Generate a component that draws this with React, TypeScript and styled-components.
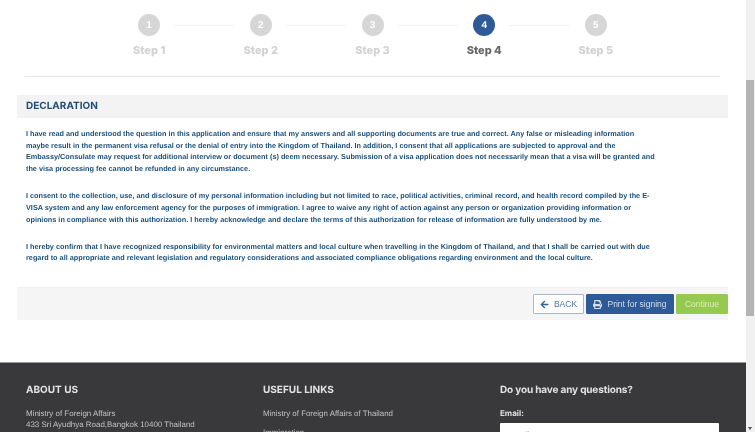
import React from 'react';
import styled, {createGlobalStyle} from 'styled-components';
import {FaArrowLeft, FaPrint} from 'react-icons/fa';

const GlobalStyle = createGlobalStyle`
	html, body {
		margin: 0;
		padding: 0;
		height: 432px;
		overflow: hidden;
		background: #fff;
		font-family: 'Liberation Sans', Arial, sans-serif;
		text-rendering: geometricPrecision;
	}
`;

const steps = [1, 2, 3, 4, 5];
const activeStep = 4;

export default function App() {
	return (
		<Page>
			<GlobalStyle />
			<Main>
				<Stepper>
					{steps.map((n) => (
						<Step key={n}>
							<Circle $active={n === activeStep}>{n}</Circle>
							<StepLabel $active={n === activeStep}>Step {n}</StepLabel>
						</Step>
					))}
				</Stepper>
				<Divider />
				<SectionHeader>DECLARATION</SectionHeader>
				<Body>
					<p>
						I have read and understood the question in this application and ensure that my answers and all supporting documents are true and correct. Any false or misleading information maybe result in the permanent visa refusal or the denial of entry into the Kingdom of Thailand. In addition, I consent that all applications are subjected to approval and the Embassy/Consulate may request for additional interview or document (s) deem necessary. Submission of a visa application does not necessarily mean that a visa will be granted and the visa processing fee cannot be refunded in any circumstance.
					</p>
					<p>
						I consent to the collection, use, and disclosure of my personal information including but not limited to race, political activities, criminal record, and health record compiled by the E-VISA system and any law enforcement agency for the purposes of immigration. I agree to waive any right of action against any person or organization providing information or opinions in compliance with this authorization. I hereby acknowledge and declare the terms of this authorization for release of information are fully understood by me.
					</p>
					<p>
						I hereby confirm that I have recognized responsibility for environmental matters and local culture when travelling in the Kingdom of Thailand, and that I shall be carried out with due regard to all appropriate and relevant legislation and regulatory considerations and associated compliance obligations regarding environment and the local culture.
					</p>
				</Body>
				<ActionBar>
					<BackButton>
						<FaArrowLeft size={9} color='#2a6496' />
						BACK
					</BackButton>
					<PrintButton>
						<FaPrint size={9} />
						Print for signing
					</PrintButton>
					<ContinueButton>Continue</ContinueButton>
				</ActionBar>
				<Footer>
					<FooterColumn>
						<FooterTitle>ABOUT US</FooterTitle>
						<FooterText>
							Ministry of Foreign Affairs
							<br />
							433 Sri Ayudhya Road,Bangkok 10400 Thailand
						</FooterText>
					</FooterColumn>
					<FooterColumn>
						<FooterTitle>USEFUL LINKS</FooterTitle>
						<FooterLink>Ministry of Foreign Affairs of Thailand</FooterLink>
						<FooterLink>Immigration</FooterLink>
					</FooterColumn>
					<FooterColumn>
						<QuestionTitle>Do you have any questions?</QuestionTitle>
						<EmailLabel>Email:</EmailLabel>
						<EmailInput placeholder='Email' />
					</FooterColumn>
				</Footer>
			</Main>
			<Scrollbar>
				<Thumb />
				<ArrowDown />
			</Scrollbar>
		</Page>
	);
}

const Page = styled.div`
	display: flex;
	width: 755px;
	height: 432px;
	overflow: hidden;
	filter: blur(0.55px);
`;

const Main = styled.div`
	width: 746px;
	flex: none;
`;

const Stepper = styled.div`
	display: flex;
	justify-content: center;
	padding-top: 14px;
	height: 61px;
	box-sizing: border-box;
	margin-left: -1px;
`;

const Step = styled.div`
	position: relative;
	width: 111.7px;
	display: flex;
	flex-direction: column;
	align-items: center;

	&:not(:last-child)::after {
		content: '';
		position: absolute;
		top: 10.5px;
		left: 81px;
		width: 60px;
		height: 1px;
		background: #f3f3f3;
	}
`;

const Circle = styled.div<{$active: boolean}>`
	width: 22px;
	height: 22px;
	border-radius: 50%;
	background: ${(p) => (p.$active ? '#2f5a98' : '#d6d6d6')};
	color: #fff;
	font-size: 10px;
	font-weight: 700;
	display: flex;
	align-items: center;
	justify-content: center;
`;

const StepLabel = styled.div<{$active: boolean}>`
	margin-top: 7px;
	font-size: 11px;
	line-height: 14px;
	font-weight: 800;
	font-family: Inter, 'Liberation Sans', sans-serif;
	color: ${(p) => (p.$active ? '#666' : '#d2d2d2')};
`;

const Divider = styled.div`
	height: 1px;
	margin: 15px 26px 18px 25px;
	background: #e6e6e6;
`;

const SectionHeader = styled.div`
	margin: 0 18px 0 17px;
	height: 23px;
	padding-left: 9px;
	background: #f3f3f3;
	color: #1e4d78;
	font-size: 10px;
	font-weight: 700;
	font-family: Inter, 'Liberation Sans', sans-serif;
	line-height: 23px;
`;

const Body = styled.div`
	margin: 10px 0 0 26px;
	width: 631.5px;
	height: 159px;
	color: #1a4f7a;
	font-size: 7.29px;
	font-weight: 700;
	line-height: 11.67px;

	p {
		margin: 0 0 15.5px;
	}
`;

const ActionBar = styled.div`
	margin: 0 18px 0 17px;
	height: 33px;
	box-sizing: border-box;
	padding-top: 6px;
	background: #f5f5f5;
	border-top: 1px solid #eee;
	display: flex;
	justify-content: flex-end;
	gap: 2px;
`;

const BaseButton = styled.button`
	height: 20px;
	box-sizing: border-box;
	display: flex;
	align-items: center;
	justify-content: center;
	gap: 5px;
	padding: 0;
	font-family: 'Liberation Sans', Arial, sans-serif;
	font-size: 8.5px;
	border-radius: 1px;
`;

const BackButton = styled(BaseButton)`
	width: 51px;
	background: #fff;
	border: 1.5px solid #a9b7cc;
	color: #4f7299;
`;

const PrintButton = styled(BaseButton)`
	width: 88px;
	background: #2f5a98;
	border: 1px solid #2f5a98;
	color: #d5deea;
`;

const ContinueButton = styled(BaseButton)`
	width: 52px;
	background: #96c94f;
	border: 1px solid #96c94f;
	color: #dcefc0;
`;

const Footer = styled.div`
	margin-top: 42px;
	height: 70px;
	box-sizing: border-box;
	background: #39393b;
	border-top: 1px solid #9a9a9a;
	padding: 21px 27px 0 26px;
	display: grid;
	grid-template-columns: 237px 237px 219px;
	overflow: hidden;
`;

const FooterColumn = styled.div`
	display: flex;
	flex-direction: column;
`;

const FooterTitle = styled.div`
	font-family: Inter, 'Liberation Sans', sans-serif;
	font-size: 10px;
	font-weight: 700;
	line-height: 13px;
	color: #e2e2e2;
	margin-bottom: 11px;
`;

const QuestionTitle = styled(FooterTitle)`
	letter-spacing: -0.15px;
`;

const FooterText = styled.div`
	font-size: 7.95px;
	line-height: 11px;
	color: #c2c2c2;
`;

const FooterLink = styled.div`
	font-size: 7.9px;
	line-height: 11px;
	color: #c2c2c2;
	margin-bottom: 8px;
`;

const EmailLabel = styled.div`
	font-family: Inter, 'Liberation Sans', sans-serif;
	font-size: 8px;
	font-weight: 700;
	line-height: 11px;
	color: #e0e0e0;
	margin-bottom: 4px;
`;

const EmailInput = styled.input`
	width: 219px;
	height: 24px;
	box-sizing: border-box;
	border: none;
	border-radius: 1px;
	padding: 0 8px;
	background: #fff;
	font-size: 8.5px;
	font-family: 'Liberation Sans', Arial, sans-serif;

	&::placeholder {
		color: #aaa;
	}
`;

const Scrollbar = styled.div`
	flex: 1;
	background: #f1f1f1;
	position: relative;
`;

const Thumb = styled.div`
	margin: 80px 1px 0 0;
	height: 236px;
	background: #b4b4b4;
`;

const ArrowDown = styled.div`
	position: absolute;
	left: 2px;
	bottom: 2px;
	border-left: 2.5px solid transparent;
	border-right: 2.5px solid transparent;
	border-top: 3px solid #505050;
`;
